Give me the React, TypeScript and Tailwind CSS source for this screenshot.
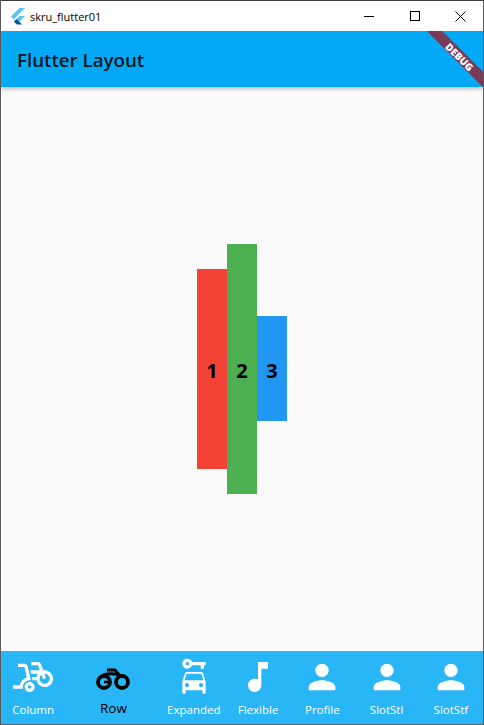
import { MdBikeScooter, MdCarRental, MdMusicNote, MdPerson } from "react-icons/md";
import type { ComponentType } from "react";

type Item = { label: string; Icon: ComponentType<{ size?: number; className?: string }> };
const before: Item[] = [{ label: "Column", Icon: MdBikeScooter }];
const after: Item[] = [
  { label: "Expanded", Icon: MdCarRental },
  { label: "Flexible", Icon: MdMusicNote },
  { label: "Profile", Icon: MdPerson },
  { label: "SlotStl", Icon: MdPerson },
  { label: "SlotStf", Icon: MdPerson },
];

function FlutterLogo() {
  return (
    <svg width="14" height="17" viewBox="0 0 14 17">
      <path d="M0 8.5 L8.5 0 H14 L2.8 11.3 Z" fill="#54c5f8" />
      <path d="M5.5 11 L8.5 8 H14 L8.3 13.7 Z" fill="#54c5f8" />
      <path d="M5.5 11 L8.3 13.7 L11 16.5 H5.8 L2.8 13.6 Z" fill="#01579b" />
    </svg>
  );
}

function RowIcon() {
  return (
    <svg width="34" height="22" viewBox="0 0 34 22" className="mt-[17px] shrink-0" fill="none" stroke="#000">
      <circle cx="8" cy="14" r="6" strokeWidth="3.8" />
      <circle cx="26" cy="14" r="6" strokeWidth="3.8" />
      <path d="M8 14 H14" strokeWidth="2.6" />
      <path d="M7 7 Q17 4 26 8" strokeWidth="3" />
      <path d="M11 2 H19 L24 8" strokeWidth="3" />
    </svg>
  );
}

function NavItem({ label, Icon }: Item) {
  return (
    <div className="flex min-w-0 flex-1 flex-col items-center text-white">
      <Icon size={40} className="mt-[6px] shrink-0" />
      <span className="mt-[5px] whitespace-nowrap text-[11.5px] leading-[15px]">{label}</span>
    </div>
  );
}

export default function App() {
  return (
    <div className="relative flex h-[725px] w-[484px] flex-col overflow-hidden border-x border-b border-[#5a5a5a] bg-[#fafafa] font-['Open_Sans',sans-serif]">
      <div className="flex h-[31px] items-center border-t border-[#3c3c3c] bg-white pl-[10px]">
        <FlutterLogo />
        <span className="ml-[5px] text-[11px] leading-none text-black">skru_flutter01</span>
        <div className="ml-auto flex h-full items-center">
          <svg width="11" height="1" viewBox="0 0 11 1" className="mr-[35px]"><rect width="10" height="1" fill="#000" /></svg>
          <svg width="10" height="10" viewBox="0 0 10 10" className="mr-[35px]"><rect x="0.5" y="0.5" width="9" height="9" fill="none" stroke="#000" /></svg>
          <svg width="11" height="11" viewBox="0 0 11 11" className="mr-[17px]"><path d="M0.5 0.5 L10.5 10.5 M10.5 0.5 L0.5 10.5" stroke="#000" strokeWidth="1" /></svg>
        </div>
      </div>

      <header className="relative z-10 flex h-[56px] items-center overflow-hidden bg-[#03a9f4] pl-[16px] shadow-[0_2px_4px_rgba(0,0,0,0.25)]">
        <h1 className="pt-[3px] text-[18.7px] font-semibold leading-none text-black/90">Flutter Layout</h1>
        <div className="absolute right-[-27px] top-[20px] flex h-[11px] w-[100px] rotate-45 items-center justify-center bg-[#7a3b57]">
          <span className="text-[10px] font-black leading-none text-white">DEBUG</span>
        </div>
      </header>

      <main className="flex flex-1 items-center justify-center">
        <div className="flex items-center text-[20px] font-bold leading-none text-black">
          <div className="flex h-[200px] w-[30px] items-center justify-center bg-[#f44336] pt-[3px]">1</div>
          <div className="flex h-[250px] w-[30px] items-center justify-center bg-[#4caf50] pt-[3px]">2</div>
          <div className="mb-[1px] flex h-[105px] w-[30px] items-center justify-center bg-[#2196f3] pt-[5px]">3</div>
        </div>
      </main>

      <nav className="flex h-[73px] items-start bg-[#29b6f6]">
        {before.map((i) => <NavItem key={i.label} {...i} />)}
        <div className="flex min-w-0 flex-[1.5] flex-col items-center text-black">
          <RowIcon />
          <span className="mt-[9px] text-[13.5px] leading-[18px]">Row</span>
        </div>
        {after.map((i) => <NavItem key={i.label} {...i} />)}
      </nav>
    </div>
  );
}
